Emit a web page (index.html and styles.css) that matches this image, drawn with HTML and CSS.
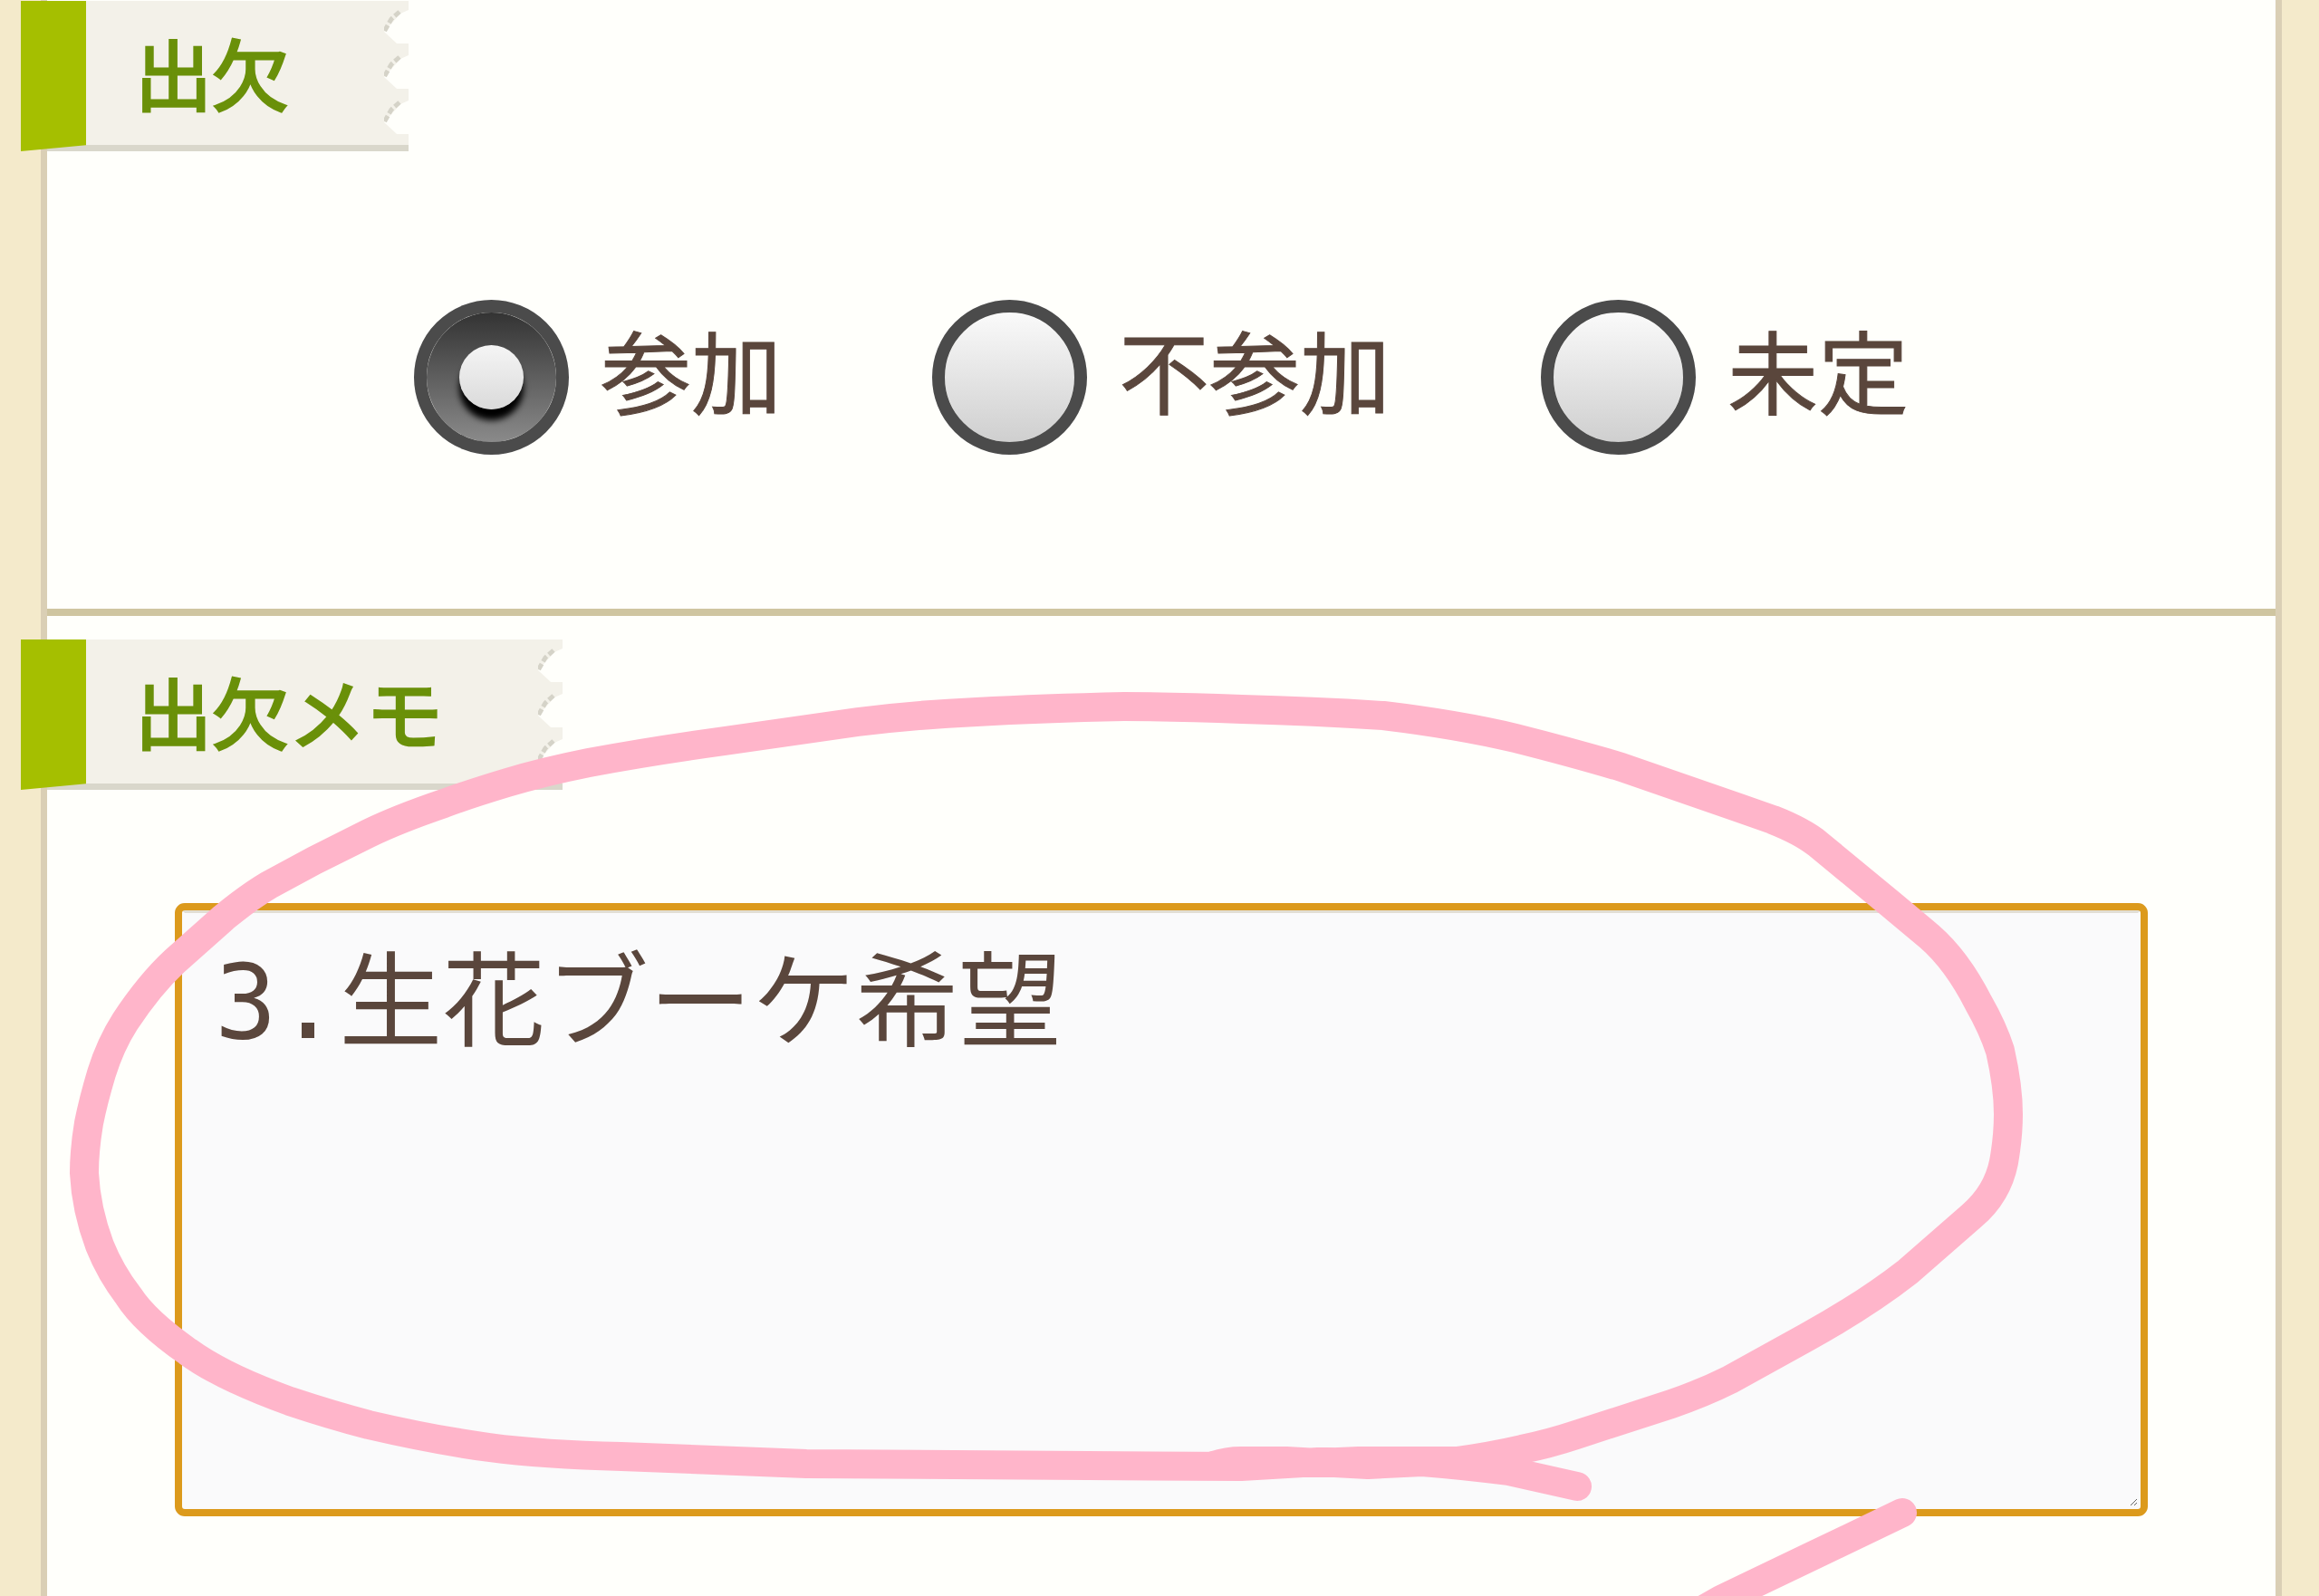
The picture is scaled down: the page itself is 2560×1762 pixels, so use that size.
FILE: index.html
```html
<!DOCTYPE html>
<html lang="ja">
<head>
<meta charset="utf-8">
<title>出欠</title>
<link rel="stylesheet" href="styles.css">
</head>
<body>
<svg class="shapes" width="0" height="0" aria-hidden="true">
  <symbol id="torn-edge" viewBox="0 0 27 159">
    <g id="teeth">
      <path d="M27 10L18 14L0 34L14 47H27Z" fill="#fffffb"/>
      <path d="M17 12L8 20L0 34" stroke="#d5d3c8" stroke-width="5" stroke-dasharray="7 3" fill="none"/>
    </g>
    <use href="#teeth" y="50"/>
    <use href="#teeth" y="100"/>
  </symbol>
</svg>
<form class="page">
  <section class="block attendance">
    <h2 class="tag" id="attendance-title">
      <span class="tab"></span>
      <span class="title">出欠</span>
      <svg class="torn" aria-hidden="true"><use href="#torn-edge"/></svg>
    </h2>
    <div class="choices" role="radiogroup" aria-labelledby="attendance-title">
      <label class="choice"><input type="radio" name="attend" checked>参加</label>
      <label class="choice"><input type="radio" name="attend">不参加</label>
      <label class="choice"><input type="radio" name="attend">未定</label>
    </div>
  </section>
  <section class="block memo">
    <h2 class="tag">
      <span class="tab"></span>
      <label class="title" for="memo">出欠メモ</label>
      <svg class="torn" aria-hidden="true"><use href="#torn-edge"/></svg>
    </h2>
    <textarea id="memo" class="note" spellcheck="false">3.生花ブーケ希望</textarea>
  </section>
</form>
<svg class="marker" viewBox="0 0 2560 1762" aria-hidden="true">
  <path d="M1340 1618Q1355 1613 1370 1613L1420 1613L1455 1615L1500 1613L1608 1613Q1645 1608 1680 1600Q1710 1594 1740 1584L1845 1550Q1880 1538 1910 1523L1995 1476Q2060 1440 2106 1404L2177 1342Q2205 1318 2212 1283Q2217 1255 2217 1230Q2217 1200 2208 1160Q2200 1135 2184 1107Q2160 1060 2130 1034L2087 998L2007 932Q1990 918 1957 905L1920 892L1790 847Q1740 832 1673 815Q1610 800 1527 790Q1450 785 1371 783Q1300 780 1241 780Q1150 782 1078 786Q1010 789 947 797L800 818Q720 829 650 842Q600 852 560 864Q520 876 490 887Q440 904 407 920L347 950L297 977Q275 990 247 1013L193 1061Q165 1087 138 1128Q122 1153 112 1185Q103 1215 98 1240Q93 1270 93 1295Q95 1335 110 1375Q122 1405 142 1431Q160 1459 207 1492Q245 1520 320 1547Q365 1562 407 1573Q480 1590 540 1598Q600 1606 686 1608L890 1616L1200 1618L1370 1619L1455 1614L1510 1617L1570 1614Q1620 1618 1665 1624L1741 1641"/>
  <path d="M2100 1670L2000 1718L1900 1766L1840 1800"/>
</svg>
</body>
</html>
```
FILE: styles.css
```css
* {
  box-sizing: border-box;
}

body {
  margin: 0;
  position: relative;
  overflow: hidden;
  min-height: 100vh;
  background: #f4eacb;
  color: #5a463c;
  font-family: "Noto Sans CJK JP", sans-serif;
}

.shapes {
  position: absolute;
}

.page {
  min-height: 100vh;
  margin: 0 41px 0 45px;
  border: solid #dacfb5;
  border-width: 0 7px;
  background: #fffffb;
}

.attendance {
  padding: 1px 0 169px;
  border-bottom: 8px solid #cfc5a0;
}

.memo {
  padding: 26px 141px 88px;
}

/* Section tags */
.tag {
  display: flex;
  width: max-content;
  height: 166px;
  margin: 0 0 0 -29px;
  color: #6a9009;
  font-size: 85px;
  font-weight: 400;
  line-height: 156px;
  -webkit-text-stroke: 3px #6a9009;
}

.memo .tag {
  margin-left: -170px;
}

.tab {
  position: relative;
  z-index: 1;
  width: 72px;
  background: #a5bf00;
  clip-path: polygon(0 0, 100% 0, 100% 96%, 0 100%);
}

.title {
  margin-left: -43px;
  padding: 0 105px 0 97px;
  background: #f3f1e9;
  border-bottom: 7px solid #d9d7cb;
}

.torn {
  width: 27px;
  height: 166px;
  background: #f3f1e9;
  border-bottom: 7px solid #d9d7cb;
}

/* Radio choices */
.choices {
  display: flex;
  justify-content: center;
  gap: 166px;
  margin-top: 164px;
}

.choice {
  display: flex;
  align-items: flex-start;
  gap: 35px;
  font-size: 100px;
  line-height: 152px;
  -webkit-text-stroke: 1px #5a463c;
}

.choice input {
  appearance: none;
  display: grid;
  place-items: center;
  width: 171px;
  height: 171px;
  margin: 0 0 1px;
  border: 14px solid #4b4b4b;
  border-radius: 50%;
  background: linear-gradient(#fafafa, #cfcfcf) padding-box;
}

.choice input:checked {
  background: linear-gradient(#333, #8a8a8a) padding-box;
}

.choice input:checked::before {
  content: "";
  width: 71px;
  height: 71px;
  border-radius: 50%;
  background: linear-gradient(#f5f5f5, #dadada);
  box-shadow: 0 12px 7px #000;
}

/* Memo field */
.note {
  display: block;
  width: 100%;
  height: 677px;
  margin: 125px 0 0;
  padding: 29px 33px;
  border: 11px solid #fafafb;
  border-top-color: #e2ded4;
  border-radius: 11px;
  outline: 8px solid #dc9a1c;
  outline-offset: -8px;
  background: #fafafb;
  color: inherit;
  font: 114px/140px "DejaVu Sans Mono", "Noto Sans CJK JP", monospace;
}

/* Hand-drawn marker over the form */
.marker {
  position: absolute;
  top: 0;
  left: 0;
  width: 100%;
  pointer-events: none;
  fill: none;
  stroke: #ffb5ca;
  stroke-width: 32;
  stroke-linecap: round;
  stroke-linejoin: round;
}
```
